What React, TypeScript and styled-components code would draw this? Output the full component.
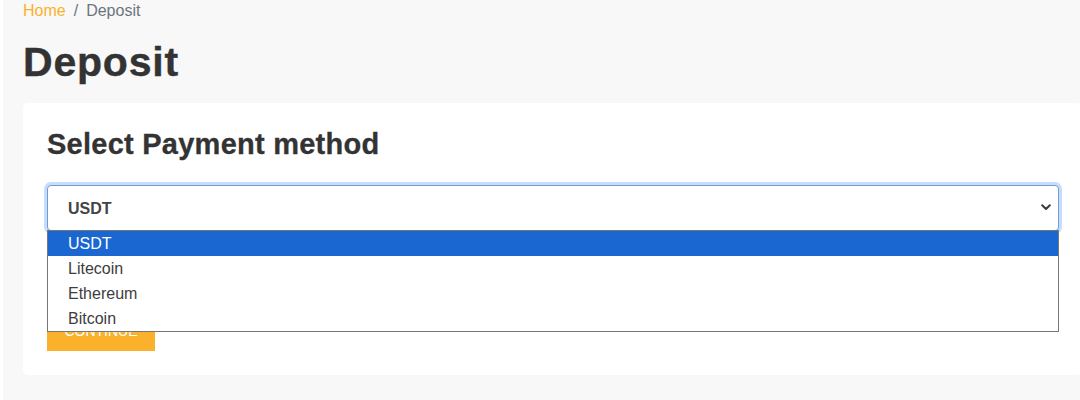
import React from "react";
import styled, { createGlobalStyle } from "styled-components";

const GlobalStyle = createGlobalStyle`
  html, body {
    margin: 0;
    padding: 0;
    background: #ffffff;
    overflow: hidden;
  }
  body {
    font-family: "Liberation Sans", Arial, sans-serif;
    color: #333333;
  }
`;

const Page = styled.main`
  margin-left: 3px;
  min-height: 400px;
  background: #f8f8f8;
  padding: 0 0 25px 20px;
  box-sizing: border-box;
`;

const Breadcrumb = styled.nav`
  display: flex;
  align-items: center;
  font-size: 16px;
  line-height: 20px;
  padding-top: 1px;
  color: #6c757d;
`;

const Crumb = styled.a<{ $active?: boolean }>`
  color: ${(p) => (p.$active ? "#6c757d" : "#fbb12b")};
  text-decoration: none;
`;

const Separator = styled.span`
  padding: 0 8px;
  color: #6c757d;
`;

const Title = styled.h1`
  margin: 17px 0 16px;
  font-size: 41px;
  line-height: 49px;
  font-weight: 700;
  color: #333333;
  letter-spacing: 0.8px;
  -webkit-text-stroke: 0.4px #333333;
`;

const Card = styled.section`
  background: #ffffff;
  border-radius: 5px;
  margin-right: -3px;
  padding: 24px 24px 24px;
`;

const CardTitle = styled.h2`
  margin: 0 0 23px;
  font-size: 29px;
  line-height: 35px;
  font-weight: 700;
  color: #333333;
  letter-spacing: 0.25px;
  -webkit-text-stroke: 0.3px #333333;
`;

const SelectWrap = styled.div`
  position: relative;
`;

const Select = styled.select`
  appearance: none;
  -webkit-appearance: none;
  display: block;
  width: 100%;
  height: 46px;
  box-sizing: border-box;
  padding: 0 40px 0 20px;
  border: 1px solid #6d9fd6;
  border-radius: 4px;
  background: #ffffff;
  box-shadow: 0 0 0 3px #c6defb;
  font-family: "Liberation Sans", Arial, sans-serif;
  font-size: 16px;
  font-weight: 700;
  color: #444444;
  outline: none;
`;

const Chevron = styled.svg`
  position: absolute;
  right: 8px;
  top: 19px;
  width: 10px;
  height: 7px;
  pointer-events: none;
`;

const OptionList = styled.ul`
  position: absolute;
  left: 0;
  right: 0;
  top: 45px;
  margin: 0;
  padding: 0;
  list-style: none;
  background: #ffffff;
  border: 1px solid #767676;
  z-index: 2;
`;

const OptionItem = styled.li<{ $selected?: boolean }>`
  height: 25px;
  line-height: 25px;
  padding-left: 20px;
  font-size: 16px;
  color: ${(p) => (p.$selected ? "#ffffff" : "#3d3d3d")};
  background: ${(p) => (p.$selected ? "#1a67d2" : "transparent")};
`;

const ContinueButton = styled.button`
  display: block;
  margin-top: 80px;
  width: 108px;
  height: 40px;
  border: none;
  border-radius: 0;
  background: #fbb12b;
  color: #ffffff;
  font-family: "Liberation Sans", Arial, sans-serif;
  font-size: 14px;
  text-transform: uppercase;
  padding: 0;
`;

const options = ["USDT", "Litecoin", "Ethereum", "Bitcoin"];

export default function App() {
  return (
    <>
      <GlobalStyle />
      <Page>
        <Breadcrumb>
          <Crumb href="#">Home</Crumb>
          <Separator>/</Separator>
          <Crumb $active>Deposit</Crumb>
        </Breadcrumb>
        <Title>Deposit</Title>
        <Card>
          <CardTitle>Select Payment method</CardTitle>
          <SelectWrap>
            <Select defaultValue="USDT">
              {options.map((o) => (
                <option key={o} value={o}>
                  {o}
                </option>
              ))}
            </Select>
            <Chevron viewBox="0 0 10 7">
              <path
                d="M1.2 1.2 L5 5 L8.8 1.2"
                fill="none"
                stroke="#3b3b3b"
                strokeWidth="2"
                strokeLinecap="round"
                strokeLinejoin="round"
              />
            </Chevron>
            <OptionList>
              {options.map((o, i) => (
                <OptionItem key={o} $selected={i === 0}>
                  {o}
                </OptionItem>
              ))}
            </OptionList>
          </SelectWrap>
          <ContinueButton>Continue</ContinueButton>
        </Card>
      </Page>
    </>
  );
}
